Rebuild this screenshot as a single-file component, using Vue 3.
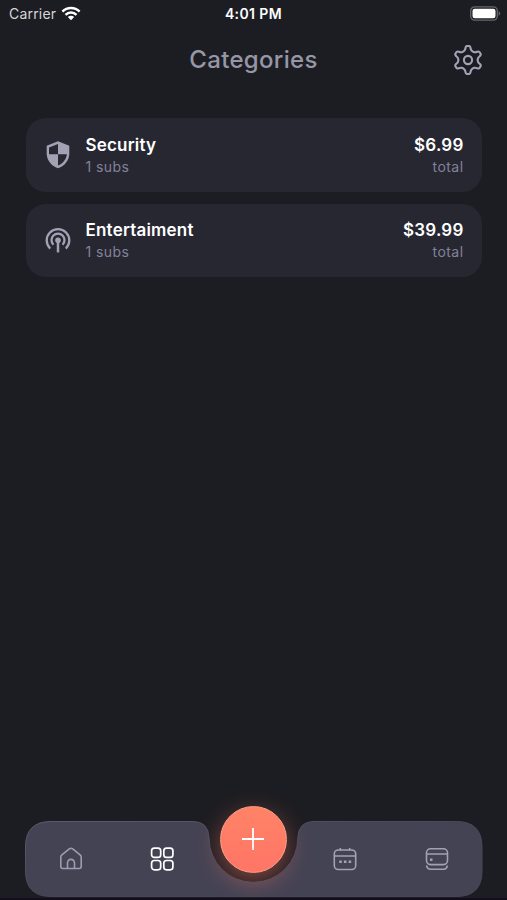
<script setup>
const categories = [
  { name: 'Security', subs: 1, total: '$6.99', icon: 'shield' },
  { name: 'Entertaiment', subs: 1, total: '$39.99', icon: 'podcast' },
]

// Six-toothed gear outline with every corner rounded off
function gearPath(cx, cy) {
  const pts = []
  for (let k = 0; k < 6; k++) {
    const base = -90 + k * 60
    for (const [offset, r] of [[-25, 9.7], [-15, 10.8], [-9, 14.2], [9, 14.2], [15, 10.8], [25, 9.7]]) {
      const a = ((base + offset) * Math.PI) / 180
      pts.push([cx + r * Math.cos(a), cy + r * Math.sin(a)])
    }
  }
  const toward = (p, q) => {
    const len = Math.hypot(q[0] - p[0], q[1] - p[1])
    const t = Math.min(1.6, len / 2) / len
    return `${(p[0] + (q[0] - p[0]) * t).toFixed(2)} ${(p[1] + (q[1] - p[1]) * t).toFixed(2)}`
  }
  const n = pts.length
  return (
    pts
      .map((p, i) => {
        const before = toward(p, pts[(i + n - 1) % n])
        const after = toward(p, pts[(i + 1) % n])
        return `${i ? 'L' : 'M'}${before}Q${p[0].toFixed(2)} ${p[1].toFixed(2)} ${after}`
      })
      .join('') + 'Z'
  )
}
const gear = gearPath(15, 15)
</script>

<template>
  <div class="screen">
    <div class="status">
      <div class="carrier">
        <span>Carrier</span>
        <svg width="20" height="15" viewBox="0 0 20 15" fill="none" stroke="#fff" stroke-width="2.5">
          <path d="M1.4 5.6C6.2.9 13.8.9 18.6 5.6" />
          <path d="M4.5 8.8c3.1-3 7.9-3 11 0" />
          <path d="M10 14.2 6.8 11c1.8-1.6 4.6-1.6 6.4 0Z" fill="#fff" stroke="none" />
        </svg>
      </div>
      <span class="time">4:01 PM</span>
      <svg class="battery" width="31" height="15" viewBox="0 0 31 15">
        <rect x=".7" y=".9" width="26.6" height="13.2" rx="4" fill="none" stroke="#66666b" stroke-width="1.3" />
        <rect x="2.5" y="2.7" width="23" height="9.6" rx="2.3" fill="#fff" />
        <path d="M28.6 5.2c2.2 1.1 2.2 3.5 0 4.6Z" fill="#66666b" />
      </svg>
    </div>

    <header class="header">
      <h1>Categories</h1>
      <svg class="gear" width="30" height="30" viewBox="0 0 30 30" fill="none" stroke="#a2a2b5" stroke-width="2.1">
        <path :d="gear" />
        <circle cx="15" cy="15" r="4.1" />
      </svg>
    </header>

    <main class="list">
      <article v-for="c in categories" :key="c.name" class="card">
        <svg v-if="c.icon === 'shield'" class="icon" width="28" height="30" viewBox="0 0 28 30">
          <path d="M14 1.2 2.7 5.8v8c0 6.4 4.7 12.4 11.3 14.4 6.6-2 11.3-8 11.3-14.4v-8Z" fill="#a2a2b5" />
          <path d="M14 4.1v10.2H5V7.6ZM14 14.3h8.9c-.5 5-4 9.4-8.9 11.3Z" fill="#282832" />
        </svg>
        <svg v-else class="icon" width="28" height="30" viewBox="0 0 28 30" fill="none" stroke="#a2a2b5" stroke-width="2.3">
          <path d="M6.2 23.6A11.3 11.3 0 1 1 21.8 23.6" />
          <path d="M9.4 19.7A6.5 6.5 0 1 1 18.6 19.7" />
          <circle cx="14" cy="15.2" r="2.8" fill="#a2a2b5" stroke="none" />
          <path d="M14 15v12.4" stroke-width="2.5" />
        </svg>
        <div class="text">
          <strong>{{ c.name }}</strong>
          <span>{{ c.subs }} subs</span>
        </div>
        <div class="text amount">
          <strong>{{ c.total }}</strong>
          <span>total</span>
        </div>
      </article>
    </main>

    <nav class="tabs">
      <svg class="shape" width="458" height="76" viewBox="0 0 458 76">
        <defs>
          <linearGradient id="edge" x1="0" y1="0" x2="1" y2="1">
            <stop offset="0" stop-color="#5c5c70" />
            <stop offset=".5" stop-color="#464655" />
          </linearGradient>
        </defs>
        <path
          d="M26 .5H168Q183.5 .5 184 17A44.4 44.4 0 0 0 272.8 17Q273.3 .5 288.8 .5H431.5Q457 .5 457 26V50Q457 75.5 431.5 75.5H26Q.5 75.5 .5 50V26Q.5 .5 26 .5Z"
          fill="#444354"
          stroke="url(#edge)"
        />
      </svg>
      <div class="tab">
        <svg width="24" height="24" viewBox="0 0 24 24" fill="none" stroke="#9d9cb1" stroke-width="1.6" stroke-linejoin="round">
          <path d="M1.8 10.2Q1.8 8.8 2.9 7.9L10.3 1.9Q12 .7 13.7 1.9L21.1 7.9Q22.2 8.8 22.2 10.2V19.5Q22.2 21.5 20.2 21.5H3.8Q1.8 21.5 1.8 19.5Z" />
          <path d="M8.5 21.5V15.9a3.5 3.5 0 0 1 7 0V21.5" />
        </svg>
      </div>
      <div class="tab">
        <svg width="24" height="24" viewBox="0 0 24 24" fill="none" stroke="#fff" stroke-width="1.7">
          <rect x="1.6" y="1.1" width="9.1" height="9.3" rx="2.7" />
          <rect x="13.8" y="1.1" width="9.1" height="9.3" rx="2.7" />
          <rect x="1.6" y="13.5" width="9.1" height="9.3" rx="2.7" />
          <rect x="13.8" y="13.5" width="9.1" height="9.3" rx="2.7" />
        </svg>
      </div>
      <div class="tab center">
        <button class="add" aria-label="Add">
          <svg width="24" height="24" viewBox="0 0 24 24" stroke="#fff" stroke-width="1.8">
            <path d="M12 1v22M1 12h22" />
          </svg>
        </button>
      </div>
      <div class="tab">
        <svg width="24" height="24" viewBox="0 0 24 24" fill="none" stroke="#a2a2b5" stroke-width="1.6">
          <rect x="1.3" y="3" width="21.4" height="19.5" rx="4" />
          <path d="M1.3 9h21.4M7.3 1v2.5M16.7 1v2.5" />
          <path d="M6.2 14.8h2.6M10.9 14.8h2.6M15.6 14.8h2.6" stroke-width="2.5" />
        </svg>
      </div>
      <div class="tab last">
        <svg width="24" height="24" viewBox="0 0 24 24" fill="none" stroke="#a2a2b5" stroke-width="1.6">
          <rect x="1.5" y="1.8" width="21" height="15.8" rx="4" />
          <path d="M1.5 7h21M1.5 18.5Q2.5 22.3 5.5 22.3H18.5Q21.5 22.3 22.5 18.5" />
          <path d="M5 12.7h2.5" stroke-width="2.5" />
        </svg>
      </div>
    </nav>
  </div>
</template>

<style>
body {
  background: #1c1d22;
}
</style>

<style scoped>
.screen {
  box-sizing: border-box;
  width: 507px;
  height: 900px;
  display: flex;
  flex-direction: column;
  overflow: hidden;
  background: #1c1d22;
  border-bottom: 2px solid #130e1b;
  font-family: Inter, "Liberation Sans", sans-serif;
  color: #fff;
}
.status {
  height: 27px;
  display: grid;
  grid-template-columns: 1fr auto 1fr;
  align-items: center;
  padding: 0 6px;
  font-size: 14px;
}
.carrier {
  display: flex;
  align-items: center;
  gap: 5px;
  margin-left: 3px;
  color: #d6d6da;
  letter-spacing: 0.2px;
}
.time {
  font-weight: 600;
  font-size: 14px;
  letter-spacing: 0.4px;
}
.battery {
  justify-self: end;
}
.header {
  height: 65px;
  display: grid;
  grid-template-columns: 1fr auto 1fr;
  align-items: center;
  padding: 0 24.5px;
}
h1 {
  grid-column: 2;
  margin: 0;
  font-size: 24px;
  font-weight: 500;
  letter-spacing: 0.3px;
  color: #9696a7;
}
.gear {
  justify-self: end;
}
.list {
  flex: 1;
  display: flex;
  flex-direction: column;
  gap: 12px;
  padding: 26px 25px 0 25.5px;
}
.card {
  box-sizing: border-box;
  height: 73.5px;
  display: flex;
  align-items: center;
  padding: 0 18.5px;
  border-radius: 20px;
  background: #272731;
}
.icon {
  margin-right: 13.5px;
}
.text {
  display: flex;
  flex-direction: column;
  padding-top: 2px;
  font-size: 14px;
  line-height: 22px;
  letter-spacing: 0.45px;
  color: #83829a;
}
.text strong {
  font-size: 17px;
  font-weight: 600;
  letter-spacing: 0.2px;
  color: #fff;
}
.amount {
  margin-left: auto;
  text-align: right;
}
.tabs {
  position: relative;
  height: 76px;
  margin: 0 25px 1.5px 25px;
  display: grid;
  grid-template-columns: repeat(5, 1fr);
}
.shape {
  position: absolute;
  top: 0;
  left: 0;
}
.tab {
  position: relative;
  display: flex;
  align-items: center;
  justify-content: center;
}
.last {
  padding-left: 1px;
}
.center {
  align-items: flex-start;
}
.add {
  flex: none;
  width: 67px;
  height: 67px;
  margin-top: -15px;
  padding: 0;
  display: flex;
  align-items: center;
  justify-content: center;
  border: 1px solid #ffa184;
  border-radius: 50%;
  background: linear-gradient(#ff8367, #ff7566);
  box-shadow: 0 8px 25px rgba(255, 121, 102, 0.45);
}
</style>
